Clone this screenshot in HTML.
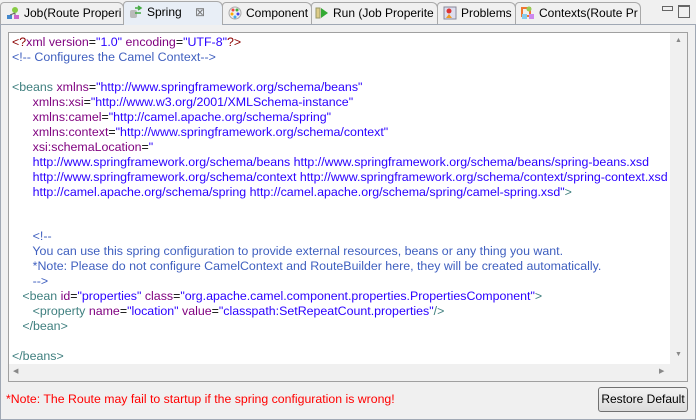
<!DOCTYPE html>
<html><head><style>
body{margin:0;width:696px;height:420px;background:#f0f0f0;font-family:"Liberation Sans",Tahoma,sans-serif;font-size:12px;position:relative;overflow:hidden}
.frame{position:absolute;left:0;top:24px;width:694px;height:394px;border:1px solid #a0a8b4;background:#f0f0f0}
.tabs{position:absolute;left:0;top:0;width:696px;height:25px}
.tab{position:absolute;top:2px;height:21px;border:1px solid #a9a9a9;border-bottom:none;border-radius:4px 6px 0 0;background:#f0f0f0;line-height:21px;font-size:12px;color:#000;white-space:nowrap;overflow:hidden}
.tab.act{background:#e8eef6;top:1px;height:23px}
.ic{display:inline-block;width:14px;height:14px;vertical-align:-3px;margin:0 4px 0 5px}
.ed{position:absolute;left:8px;top:32px;width:678px;height:348px;border:1px solid #a0a0a0;background:#fff;overflow:hidden}
.code{position:absolute;left:3px;top:2px;white-space:pre;line-height:14.95px;font-size:12.4px}
.t{color:#3f7f7f}.a{color:#7f007f}.v{color:#2a00ff}.c{color:#3f5fbf}.p{color:#8b0000}
.vs{position:absolute;right:0;top:0;width:17px;height:330px;background:#f0f0f0}
.hs{position:absolute;left:0;bottom:0;width:661px;height:17px;background:#f0f0f0}
.cor{position:absolute;right:0;bottom:0;width:17px;height:18px;background:#f0f0f0}
.note{position:absolute;left:6px;top:392px;color:#ff0000;font-size:12.3px}
.btn{position:absolute;left:598px;top:387px;width:88px;height:23px;border:1px solid #707070;border-radius:3px;background:linear-gradient(#f2f2f2,#dcdcdc);font-size:12px;line-height:23px;text-align:center}
</style></head><body>
<div class="frame"></div>
<div class="tabs">
<div class="tab" style="left:0;width:122px"><svg class="ic" viewBox="0 0 14 14"><circle cx="9" cy="4" r="3" fill="#8c4"/><rect x="1" y="9" width="5" height="4" fill="#48c"/><rect x="8" y="9" width="5" height="4" fill="#c6c"/><path d="M9 7L4 9M9 7v2" stroke="#666"/></svg>Job(Route Properi</div>
<div class="tab act" style="left:123px;width:98px"><svg class="ic" viewBox="0 0 14 14"><rect x="1" y="5" width="7" height="8" rx="2" fill="#bbb"/><path d="M6 3h6M9 1l3 2-3 2M6 8h6" stroke="#4a4" stroke-width="1.5" fill="none"/></svg>Spring <span style="color:#777;margin-left:10px">⊠</span></div>
<div class="tab" style="left:222px;width:88px"><svg class="ic" viewBox="0 0 14 14"><circle cx="7" cy="7" r="6" fill="#eee" stroke="#aaa"/><circle cx="5" cy="4" r="1.5" fill="#e44"/><circle cx="9" cy="4" r="1.5" fill="#4a4"/><circle cx="4" cy="8" r="1.5" fill="#fa0"/><circle cx="10" cy="8" r="1.5" fill="#44e"/><circle cx="7" cy="11" r="1.5" fill="#4ae"/></svg>Component</div>
<div class="tab" style="left:311px;width:125px"><svg class="ic" viewBox="0 0 14 14" style="margin-left:3px"><rect x="1" y="2" width="4" height="10" fill="#dc8" stroke="#996"/><path d="M6 2l7 5-7 5z" fill="#3a3"/></svg>Run (Job Properite</div>
<div class="tab" style="left:437px;width:77px"><svg class="ic" viewBox="0 0 14 14"><rect x="1" y="1" width="12" height="12" fill="#dde" stroke="#889"/><circle cx="6" cy="5" r="2.5" fill="#d33"/><path d="M3 12l3-4 3 4z" fill="#e92"/></svg>Problems</div>
<div class="tab" style="left:515px;width:124px"><svg class="ic" viewBox="0 0 14 14"><rect x="1" y="2" width="8" height="8" fill="none" stroke="#e73" stroke-width="2"/><rect x="1" y="8" width="5" height="5" fill="#8ce"/><rect x="8" y="8" width="5" height="5" fill="#c8e"/><circle cx="8" cy="3" r="2.5" fill="#9c5"/></svg>Contexts(Route Pr</div>
<div style="position:absolute;left:662px;top:6px;width:9px;height:3px;border:1px solid #666"></div>
<div style="position:absolute;left:678px;top:5px;width:10px;height:10px;border:1px solid #666;border-top-width:2px"></div>
</div>
<div class="ed">
<div class="code"><span class="p">&lt;?</span><span class="a">xml version</span>=<span class="v">"1.0"</span> <span class="a">encoding</span>=<span class="v">"UTF-8"</span><span class="p">?&gt;</span>
<span class="c">&lt;!-- Configures the Camel Context--&gt;</span>

<span class="t">&lt;beans</span> <span class="a">xmlns</span>=<span class="v">"http://www.springframework.org/schema/beans"</span>
      <span class="a">xmlns:xsi</span>=<span class="v">"http://www.w3.org/2001/XMLSchema-instance"</span>
      <span class="a">xmlns:camel</span>=<span class="v">"http://camel.apache.org/schema/spring"</span>
      <span class="a">xmlns:context</span>=<span class="v">"http://www.springframework.org/schema/context"</span>
      <span class="a">xsi:schemaLocation</span>=<span class="v">"</span>
<span class="v">      http://www.springframework.org/schema/beans http://www.springframework.org/schema/beans/spring-beans.xsd</span>
<span class="v">      http://www.springframework.org/schema/context http://www.springframework.org/schema/context/spring-context.xsd</span>
<span class="v">      http://camel.apache.org/schema/spring http://camel.apache.org/schema/spring/camel-spring.xsd"</span><span class="t">&gt;</span>


<span class="c">      &lt;!--
      You can use this spring configuration to provide external resources, beans or any thing you want.
      *Note: Please do not configure CamelContext and RouteBuilder here, they will be created automatically.
      --&gt;</span>
   <span class="t">&lt;bean</span> <span class="a">id</span>=<span class="v">"properties"</span> <span class="a">class</span>=<span class="v">"org.apache.camel.component.properties.PropertiesComponent"</span><span class="t">&gt;</span>
      <span class="t">&lt;property</span> <span class="a">name</span>=<span class="v">"location"</span> <span class="a">value</span>=<span class="v">"classpath:SetRepeatCount.properties"</span><span class="t">/&gt;</span>
   <span class="t">&lt;/bean&gt;</span>

<span class="t">&lt;/beans&gt;</span></div>
<div class="vs"><span style="position:absolute;left:5px;top:4px;font-size:7px;color:#888">▲</span><span style="position:absolute;left:5px;top:318px;font-size:7px;color:#888">▼</span></div>
<div class="hs"><span style="position:absolute;left:4px;top:3px;font-size:7px;color:#888">◀</span><span style="position:absolute;left:650px;top:3px;font-size:7px;color:#888">▶</span></div>
<div class="cor"></div>
</div>
<div class="note">*Note: The Route may fail to startup if the spring configuration is wrong!</div>
<div class="btn">Restore Default</div>
</body></html>
